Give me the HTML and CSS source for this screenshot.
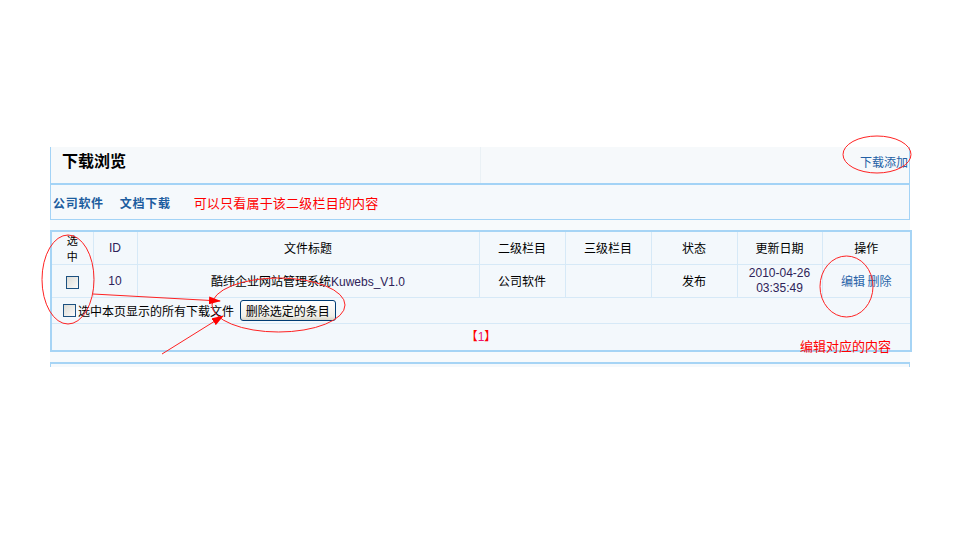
FILE: index.html
```html
<!DOCTYPE html>
<html lang="zh-CN">
<head>
    <meta charset="UTF-8">
    <title>下载浏览</title>
    <link rel="stylesheet" href="styles.css">
</head>
<body>
    <div class="wrap">
        <div class="head">
            <div class="headTitle">下载浏览</div>
            <div class="headLink"><a href="#">下载添加</a></div>
        </div>
        <div class="sub">
            <a href="#">公司软件</a>
            <a href="#">文档下载</a>
            <span class="note">可以只看属于该二级栏目的内容</span>
        </div>

        <table class="list">
            <tr class="thead">
                <td class="cSel"><span class="stack">选<br>中</span></td>
                <td class="cId latin">ID</td>
                <td class="cTitle">文件标题</td>
                <td class="cCol">二级栏目</td>
                <td class="cCol">三级栏目</td>
                <td class="cCol">状态</td>
                <td class="cDate">更新日期</td>
                <td class="cOps">操作</td>
            </tr>
            <tr class="row">
                <td><input type="checkbox" class="chk"></td>
                <td class="latin">10</td>
                <td>酷纬企业网站管理系统<span class="latin">Kuwebs_V1.0</span></td>
                <td>公司软件</td>
                <td></td>
                <td>发布</td>
                <td class="date latin">2010-04-26 03:35:49</td>
                <td class="ops"><a href="#">编辑</a> <a href="#">删除</a></td>
            </tr>
            <tr class="batch">
                <td colspan="8">
                    <label><input type="checkbox" class="chk">选中本页显示的所有下载文件</label>
                    <button type="button" class="btn">删除选定的条目</button>
                </td>
            </tr>
            <tr class="pager">
                <td colspan="8"><span>【<b>1</b>】</span></td>
            </tr>
        </table>

        <div class="foot"></div>
    </div>

    <!-- 标注层 -->
    <svg class="marks" width="960" height="547" viewBox="0 0 960 547">
        <defs>
            <marker id="head" markerWidth="12" markerHeight="8" refX="11" refY="4" orient="auto" markerUnits="userSpaceOnUse">
                <path d="M0,0 L12,4 L0,8 Z" fill="#f00"/>
            </marker>
        </defs>
        <g fill="none" stroke="#f22" stroke-width="1">
            <ellipse cx="877" cy="154.5" rx="34" ry="18.5"/>
            <ellipse cx="68" cy="279.5" rx="26" ry="44.5"/>
            <ellipse cx="278.5" cy="305" rx="66.5" ry="27"/>
            <ellipse cx="846.5" cy="286.5" rx="26.5" ry="30.5"/>
            <line x1="93" y1="294" x2="220" y2="301" marker-end="url(#head)"/>
            <line x1="162" y1="354" x2="223" y2="316" marker-end="url(#head)"/>
        </g>
    </svg>
    <span class="tip tipEdit">编辑对应的内容</span>
    <span class="tip tipDel">可批量删除</span>
</body>
</html>
```

FILE: styles.css
```css
* {
    padding: 0;
    margin: 0;
    box-sizing: border-box;
}

body {
    position: relative;
    font-family: "Noto Sans CJK SC", "Liberation Sans", sans-serif;
    font-size: 12px;
    color: #000;
    background: #fff;
}

a {
    color: #2360a5;
    text-decoration: none;
}

.latin {
    font-family: "Liberation Sans", "Noto Sans CJK SC", sans-serif;
    color: #2e2258;
}

.wrap {
    width: 860px;
    margin: 147px auto 0;
    background-color: #f7fafc;
}

.head {
    display: flex;
    height: 37px;
    border: 1px solid #a3d3f6;
    border-top: none;
    background-color: #f6f9fb;
}

.head .headTitle {
    width: 430px;
    padding: 2px 0 0 11px;
    font-size: 16px;
    font-weight: bold;
    line-height: 22px;
    border-right: 1px solid #eaf1f5;
}

.head .headLink {
    flex: 1;
    display: flex;
    align-items: center;
    justify-content: flex-end;
    padding: 0 1px 8px 0;
}

.sub {
    display: flex;
    align-items: center;
    height: 36px;
    padding-left: 2px;
    border: 1px solid #a3d3f6;
    background-color: #f5f9fc;
}

.sub a {
    font-weight: bold;
    letter-spacing: 0.7px;
    color: #1d5d9f;
    margin-right: 16px;
}

.sub .note {
    margin-left: 7px;
    color: #f00;
    font-size: 13px;
    letter-spacing: 0.2px;
}

.list {
    width: 860px;
    margin-top: 10px;
    border-collapse: collapse;
    border: 2px solid #a6d4f5;
    background-color: #f3f8fc;
    table-layout: fixed;
}

.list td {
    border: 1px solid #d6e9f7;
    text-align: center;
    vertical-align: middle;
    line-height: 14px;
}

.list .cSel { width: 42px; }
.list .cId { width: 44px; }
.list .cTitle { width: 342px; }
.list .cCol { width: 86px; }
.list .cDate { width: 85px; }
.list .cOps { width: 89px; }

.list .stack {
    display: inline-block;
    font-size: 11px;
    line-height: 16px;
}

.list .thead td { height: 33px; }
.list .row td { height: 33px; }

.list .row .date {
    padding: 0 10px;
    line-height: 15px;
}

.list .ops a { color: #2a64a8; }

.chk {
    appearance: none;
    -webkit-appearance: none;
    display: inline-block;
    width: 13px;
    height: 13px;
    border: 1px solid #1c5180;
    background: linear-gradient(135deg, #dcdcd6, #fbfbfa);
    vertical-align: middle;
}

.list .batch td {
    height: 26px;
    text-align: left;
    padding-left: 11px;
}

.list .batch label {
    display: inline-flex;
    align-items: center;
    gap: 2px;
    vertical-align: middle;
}

.btn {
    margin-left: 3px;
    height: 21px;
    padding: 0 5px;
    border: 1px solid #003c74;
    border-radius: 3px;
    background: linear-gradient(#fff, #f0efe8 80%, #d8d5c8);
    font-family: "Noto Sans CJK SC", sans-serif;
    font-size: 12px;
    vertical-align: middle;
}

.list .pager td {
    height: 27px;
    color: #f00;
}

.list .pager b {
    font-weight: normal;
    font-family: "Liberation Sans", sans-serif;
    color: #e8157a;
}

.foot {
    height: 15px;
    border-top: 10px solid #f7fafc;
    background: #fff;
}

.foot::before {
    content: "";
    display: block;
    height: 5px;
    border: 1px solid #a6d4f5;
    border-top-width: 2px;
    border-bottom: none;
    background-color: #f5f9fc;
}

.marks {
    position: absolute;
    left: 0;
    top: 0;
    pointer-events: none;
}

.tip {
    position: absolute;
    color: #f00;
    font-size: 13px;
    line-height: 16px;
}

.tipEdit {
    left: 800px;
    top: 338px;
}

.tipDel {
    left: 97px;
    top: 369px;
}
```
